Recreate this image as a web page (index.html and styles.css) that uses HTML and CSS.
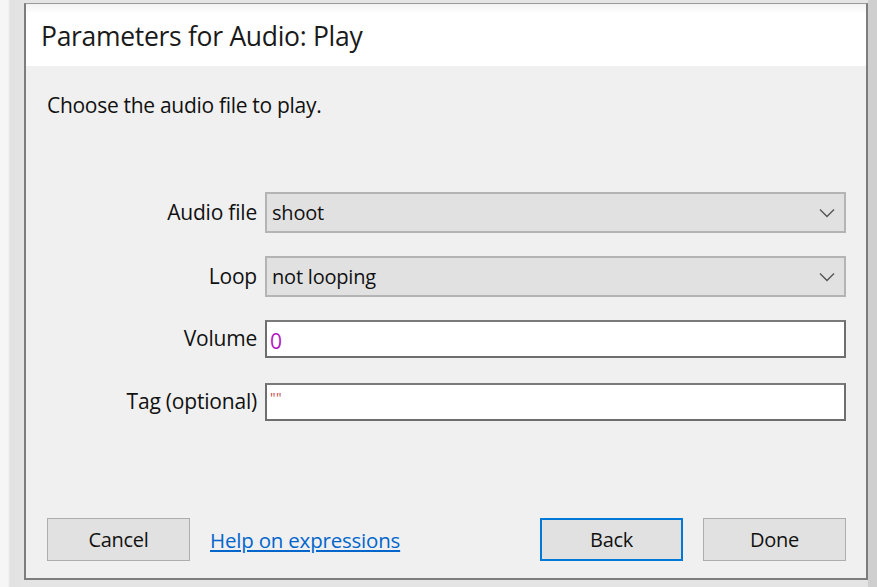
FILE: index.html
```html
<!DOCTYPE html>
<html>
<head>
<meta charset="utf-8">
<link rel="stylesheet" href="styles.css">
</head>
<body>
<div class="desk">
  <div class="dialog">
    <div class="header"><span class="title">Parameters for Audio: Play</span></div>
    <div class="content">
      <p class="desc">Choose the audio file to play.</p>
      <div class="form">
        <div class="row row-combo">
          <label class="lbl">Audio file</label>
          <div class="combo"><span class="val">shoot</span>
            <svg class="chev" width="16" height="10" viewBox="0 0 16 10"><path d="M1 1.5 L8 8.5 L15 1.5" fill="none" stroke="#555" stroke-width="1.4"/></svg>
          </div>
        </div>
        <div class="row row-combo">
          <label class="lbl">Loop</label>
          <div class="combo"><span class="val">not looping</span>
            <svg class="chev" width="16" height="10" viewBox="0 0 16 10"><path d="M1 1.5 L8 8.5 L15 1.5" fill="none" stroke="#555" stroke-width="1.4"/></svg>
          </div>
        </div>
        <div class="row row-text">
          <label class="lbl">Volume</label>
          <div class="text"><span class="num">0</span></div>
        </div>
        <div class="row row-text">
          <label class="lbl">Tag (optional)</label>
          <div class="text"><span class="str">""</span></div>
        </div>
      </div>
      <div class="footer">
        <button class="btn">Cancel</button>
        <a class="help" href="#">Help on expressions</a>
        <div class="spacer"></div>
        <button class="btn btn-default">Back</button>
        <button class="btn">Done</button>
      </div>
    </div>
  </div>
</div>
</body>
</html>
```
FILE: styles.css
```css
html, body {
  margin: 0;
  padding: 0;
}
body {
  width: 877px;
  height: 587px;
  overflow: hidden;
  background: linear-gradient(to right, #f6f6f6 0, #f6f6f6 8px, #e2e2e2 10px, #e4e4e4 22px, #e4e4e4 100%);
  font-family: "Open Sans", "Noto Sans", sans-serif;
  color: #111;
}
.desk {
  padding: 3px 9px 0 24px;
  background: linear-gradient(to right, transparent 0, transparent 868px, #cfcfcf 868px);
  height: 587px;
  box-sizing: border-box;
}
.dialog {
  width: 844px;
  height: 577px;
  box-sizing: border-box;
  border: 2px solid #7d7d7d;
  border-top: 1px solid #9a9a9a;
  display: flex;
  flex-direction: column;
  background: #f0f0f0;
}
.header {
  height: 62px;
  background: linear-gradient(#f2f2f2 0, #ffffff 10px, #ffffff 100%);
  display: flex;
  align-items: center;
  padding-left: 15px;
  flex: none;
}
.title {
  font-size: 26.5px;
  letter-spacing: -0.3px;
  color: #1a1a1a;
  margin-top: 2px;
}
.content {
  flex: 1;
  display: flex;
  flex-direction: column;
  padding: 0 20px 17px 21px;
}
.desc {
  margin: 27px 0 0 0;
  font-size: 21px;
  letter-spacing: -0.3px;
  line-height: 24px;
}
.form {
  margin-top: 75px;
  display: flex;
  flex-direction: column;
}
.row {
  display: flex;
  align-items: center;
  gap: 8px;
}
.row + .row { margin-top: 23px; }
.row-text + .row-text { margin-top: 25px; }
.lbl {
  width: 210px;
  text-align: right;
  font-size: 21px;
  letter-spacing: -0.2px;
  margin-top: -2px;
  line-height: 24px;
}
.combo {
  flex: 1;
  height: 41px;
  box-sizing: border-box;
  background: #e1e1e1;
  border: 2px solid #b4b4b4;
  display: flex;
  align-items: center;
  padding: 0 9px 0 5px;
}
.val {
  flex: 1;
  font-size: 20px;
  letter-spacing: -0.2px;
  line-height: 24px;
}
.chev { flex: none; }
.text {
  flex: 1;
  height: 38px;
  box-sizing: border-box;
  background: #ffffff;
  border: 2px solid #6e6e6e;
  border-top-color: #7a7a7a;
  display: flex;
  align-items: center;
  padding: 0 3px;
}
.num {
  color: #b018c0;
  font-size: 21px;
  line-height: 24px;
  margin-top: 3px;
}
.str {
  color: #c84a4a;
  font-size: 14px;
  line-height: 16px;
  margin-top: -8px;
  letter-spacing: 0.5px;
}
.footer {
  margin-top: auto;
  display: flex;
  align-items: center;
}
.btn {
  width: 143px;
  height: 43px;
  box-sizing: border-box;
  background: #e1e1e1;
  border: 1px solid #adadad;
  font-family: "Open Sans", "Noto Sans", sans-serif;
  font-size: 20px;
  letter-spacing: -0.3px;
  color: #111;
  padding: 0;
}
.btn-default {
  border: 2px solid #0078d7;
  margin-right: 20px;
}
.help {
  margin-left: 20px;
  font-size: 20.5px;
  letter-spacing: -0.2px;
  color: #0066cc;
  text-decoration: underline;
}
.spacer { flex: 1; }
```
